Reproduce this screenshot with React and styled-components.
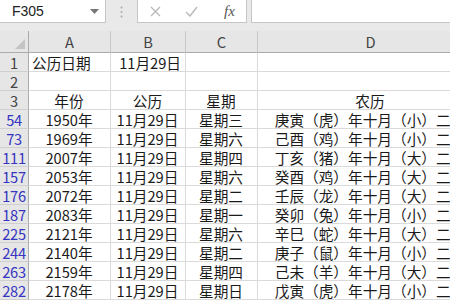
import React from "react";
import styled, { createGlobalStyle } from "styled-components";

const GlobalStyle = createGlobalStyle`
  html, body { margin: 0; padding: 0; }
  body {
    width: 450px;
    height: 300px;
    overflow: hidden;
    background: #e9e9e9;
    font-family: "Noto Sans CJK SC", "Noto Sans", sans-serif;
  }
`;

const Page = styled.div`
  width: 450px;
  height: 300px;
  overflow: hidden;
  display: flex;
  flex-direction: column;
`;

const FormulaBar = styled.div`
  height: 23px;
  flex: none;
  display: flex;
  align-items: stretch;
  background: #e9e9e9;
`;

const NameBox = styled.div`
  width: 106px;
  box-sizing: border-box;
  background: #fff;
  border-right: 1px solid #c6c6c6;
  border-bottom: 1px solid #c6c6c6;
  display: flex;
  align-items: center;
  justify-content: space-between;
  padding: 0 6px 0 12px;
  font-size: 14px;
  color: #222;
  font-family: "Liberation Sans", "Noto Sans", sans-serif;
`;

const Grip = styled.div`
  width: 31px;
  display: flex;
  align-items: center;
  justify-content: center;
`;

const ActionBox = styled.div`
  width: 110px;
  box-sizing: border-box;
  background: #fff;
  border-left: 1px solid #c6c6c6;
  border-right: 1px solid #c6c6c6;
  border-bottom: 1px solid #c6c6c6;
  display: flex;
  align-items: center;
  padding-left: 12px;
  gap: 24px;
`;

const Fx = styled.span`
  font-family: "Liberation Serif", serif;
  font-style: italic;
  font-size: 15px;
  color: #555;
  margin-left: 2px;
`;

const InputBox = styled.div`
  flex: 1;
  margin-left: 4px;
  background: #fff;
  border-left: 1px solid #c6c6c6;
  border-bottom: 1px solid #c6c6c6;
`;

const Sheet = styled.div`
  margin-top: 8px;
  display: grid;
  grid-template-columns: 29px 82px 75px 72px 226px;
  grid-auto-rows: 19px;
  grid-template-rows: 22px;
  font-size: 14.67px;
  color: #1a1a1a;
`;

const Cell = styled.div`
  box-sizing: border-box;
  border-right: 1px solid #dadada;
  border-bottom: 1px solid #dadada;
  background: #fff;
  padding: 1px 4px 0 3px;
  line-height: 18px;
  white-space: nowrap;
  text-align: ${(p) => p.$align || "center"};
`;

const ColHead = styled.div`
  box-sizing: border-box;
  background: #e6e6e6;
  border-right: 1px solid #c8c8c8;
  border-bottom: 1px solid #ababab;
  line-height: 21px;
  text-align: center;
  color: #444;
`;

const RowHead = styled.div`
  box-sizing: border-box;
  background: #e6e6e6;
  border-right: 1px solid #ababab;
  border-bottom: 1px solid #cfcfcf;
  padding-top: 1px;
  line-height: 18px;
  text-align: center;
  white-space: nowrap;
  color: ${(p) => (p.$filtered ? "#3535c0" : "#444")};
  letter-spacing: -0.3px;
`;

const Corner = styled(ColHead)`
  border-right: 1px solid #ababab;
  display: flex;
  align-items: flex-end;
  justify-content: flex-end;
  padding: 0 3px 3px 0;
`;

const rows = [
  [54, "1950年", "星期三", "庚寅（虎）年十月（小）二十"],
  [73, "1969年", "星期六", "己酉（鸡）年十月（小）二十"],
  [111, "2007年", "星期四", "丁亥（猪）年十月（大）二十"],
  [157, "2053年", "星期六", "癸酉（鸡）年十月（大）二十"],
  [176, "2072年", "星期二", "壬辰（龙）年十月（大）二十"],
  [187, "2083年", "星期一", "癸卯（兔）年十月（小）二十"],
  [225, "2121年", "星期六", "辛巳（蛇）年十月（大）二十"],
  [244, "2140年", "星期二", "庚子（鼠）年十月（小）二十"],
  [263, "2159年", "星期四", "己未（羊）年十月（大）二十"],
  [282, "2178年", "星期日", "戊寅（虎）年十月（小）二十"],
];

export default function App() {
  return (
    <Page>
      <GlobalStyle />
      <FormulaBar>
        <NameBox>
          <span>F305</span>
          <svg width="9" height="5" viewBox="0 0 9 5">
            <polygon points="0,0 9,0 4.5,5" fill="#777" />
          </svg>
        </NameBox>
        <Grip>
          <svg width="3" height="12" viewBox="0 0 3 12">
            <circle cx="1.5" cy="1.5" r="1" fill="#aaa" />
            <circle cx="1.5" cy="6" r="1" fill="#aaa" />
            <circle cx="1.5" cy="10.5" r="1" fill="#aaa" />
          </svg>
        </Grip>
        <ActionBox>
          <svg width="11" height="11" viewBox="0 0 11 11">
            <path d="M1 1 L10 10 M10 1 L1 10" stroke="#b8b8b8" strokeWidth="1.3" />
          </svg>
          <svg width="13" height="11" viewBox="0 0 13 11">
            <path d="M1 6 L5 10 L12 1" stroke="#b8b8b8" strokeWidth="1.4" fill="none" />
          </svg>
          <Fx>fx</Fx>
        </ActionBox>
        <InputBox />
      </FormulaBar>
      <Sheet>
        <Corner>
          <svg width="10" height="10" viewBox="0 0 10 10">
            <polygon points="10,0 10,10 0,10" fill="#c4c4c4" />
          </svg>
        </Corner>
        <ColHead>A</ColHead>
        <ColHead>B</ColHead>
        <ColHead>C</ColHead>
        <ColHead>D</ColHead>

        <RowHead>1</RowHead>
        <Cell $align="left">公历日期</Cell>
        <Cell $align="right">11月29日</Cell>
        <Cell />
        <Cell />

        <RowHead>2</RowHead>
        <Cell />
        <Cell />
        <Cell />
        <Cell />

        <RowHead>3</RowHead>
        <Cell>年份</Cell>
        <Cell>公历</Cell>
        <Cell>星期</Cell>
        <Cell>农历</Cell>

        {rows.map(([n, y, w, l]) => (
          <React.Fragment key={n}>
            <RowHead $filtered>{n}</RowHead>
            <Cell>{y}</Cell>
            <Cell>11月29日</Cell>
            <Cell>{w}</Cell>
            <Cell>{l}</Cell>
          </React.Fragment>
        ))}
      </Sheet>
    </Page>
  );
}
